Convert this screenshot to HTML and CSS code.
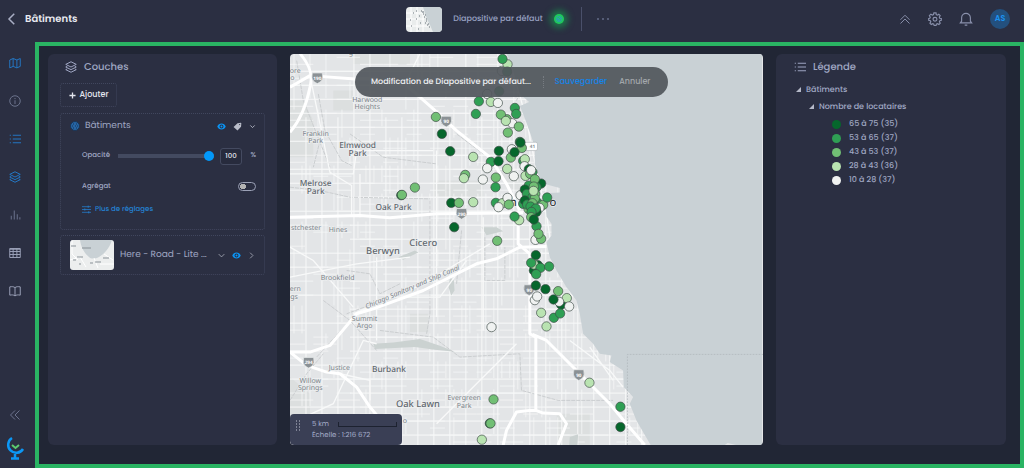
FILE: index.html
```html
<!DOCTYPE html>
<html lang="fr">
<head>
  <meta charset="UTF-8" />
  <meta name="viewport" content="width=device-width, initial-scale=1.0" />
  <title>Bâtiments</title>
  <link rel="stylesheet" href="styles.css">
</head>
<body>
  <svg class="defs" width="0" height="0" aria-hidden="true">
    <symbol id="i-layers" viewBox="0 0 16 16"><path d="M8 1 15 4.500 8 8 1 4.500ZM3 7 1 8l7 3.500L15 8l-2-1M3 10.500l-2 1L8 15l7-3.500-2-1"/></symbol>
    <symbol id="i-list" viewBox="0 0 16 16"><path d="M5 3h11M5 8h11M5 13h11M1 3h1.500M1 8h1.500M1 13h1.500"/></symbol>
    <symbol id="i-eye" viewBox="0 0 16 16"><path class="solid" fill-rule="evenodd" d="M8 2.500C4.500 2.500 1.800 4.800.5 8c1.300 3.200 4 5.500 7.500 5.500s6.200-2.300 7.500-5.500C14.200 4.800 11.500 2.500 8 2.500Zm0 2a3.500 3.500 0 1 1 0 7 3.500 3.500 0 0 1 0-7Zm0 1.700a1.800 1.800 0 1 0 0 3.600 1.800 1.800 0 0 0 0-3.600Z"/></symbol>
    <symbol id="i-down" viewBox="0 0 16 16"><path d="m3 5.500 5 5 5-5"/></symbol>
    <symbol id="i-right" viewBox="0 0 16 16"><path d="m5.500 3 5 5-5 5"/></symbol>
  </svg>

  <header class="topbar">
    <div class="title">
      <a href="#" class="icon-link" aria-label="Retour"><svg class="icon back" viewBox="0 0 16 16"><path d="M11 1 4 8l7 7"/></svg></a>
      <h1>Bâtiments</h1>
    </div>
    <div class="slide">
      <svg class="slide-thumb" viewBox="0 0 36 25">
        <path fill="#e9ecec" d="M0 0h36v25H0z"/>
        <path fill="#c9d1d5" d="M17 0h19v25H27l-3-7-3-6z"/>
        <path stroke="#fff" fill="none" d="M0 6h16M0 12h18M0 19h22M5 0v25M11 0v25M17 3v22"/>
        <path class="specks" d="M10 4h1M15 4h1M7 6h1M17 7h1M13 9h1M18 10h1M4 13h1M10 12h1M20 14h1M19 16h1M21 18h1M5 19h1M23 20h1M14 16h1M12 22h1M16 5h2M19 8h1M20 12h1M22 17h1"/>
      </svg>
      <span class="slide-name">Diapositive par défaut</span>
      <button class="pulse" aria-label="Position de la carte"><svg class="icon" viewBox="0 0 16 16"><circle cx="8" cy="8" r="5.500"/><path d="m4 10 6-6M6 12l6-6M4 6l6 6"/></svg></button>
      <button class="more" aria-label="Plus"><svg viewBox="0 0 14 4"><circle cx="2" cy="2" r="1"/><circle cx="7" cy="2" r="1"/><circle cx="12" cy="2" r="1"/></svg></button>
    </div>
    <div class="actions">
      <button aria-label="Réduire"><svg class="icon" viewBox="0 0 16 16"><path d="m2 9 6-6 6 6M2 14l6-6 6 6"/></svg></button>
      <button aria-label="Paramètres"><svg class="icon gear" viewBox="0 0 16 16"><path d="m6.700 1-.4 1.900-1.300.6-1.700-1-1.700 1.700 1 1.700L2 7.200.8 7.500v2L2.700 10l.5 1.200-1 1.600 1.500 1.500 1.700-1 1.200.5.400 1.600h2.200l.4-1.600 1.200-.5 1.700 1 1.500-1.500-1-1.700.5-1.100 1.700-.5v-2l-1.800-.4-.5-1.200 1-1.700-1.600-1.600-1.600 1-1.300-.6L9.200 1Z"/><circle cx="8" cy="8.300" r="2.200"/></svg></button>
      <button aria-label="Notifications"><svg class="icon bell" viewBox="0 0 16 16"><path d="M1.500 12.500h13L13 10.500V6.500a5 5 0 0 0-10 0v4ZM6.500 15h3"/></svg></button>
      <button class="avatar">AS</button>
    </div>
  </header>

  <div class="shell">
    <nav class="sidebar">
      <a href="#" class="on" aria-label="Carte"><svg class="icon" viewBox="0 0 16 16"><path d="m1 4 4.500-2 5 2L15 2v10.500l-4.500 2-5-2L1 14.500ZM5.500 2v10.500M10.500 4v10.500"/></svg></a>
      <a href="#" aria-label="Informations"><svg class="icon" viewBox="0 0 16 16"><circle cx="8" cy="8" r="7"/><path d="M8 7v5M8 4v1.500"/></svg></a>
      <a href="#" class="on" aria-label="Légende"><svg class="icon"><use href="#i-list"/></svg></a>
      <a href="#" class="on" aria-label="Couches"><svg class="icon"><use href="#i-layers"/></svg></a>
      <a href="#" aria-label="Graphiques"><svg class="icon" viewBox="0 0 16 16"><path d="M3 14V9M7 14V2M11 14V7M14.500 14v-3"/></svg></a>
      <a href="#" class="light" aria-label="Tableau"><svg class="icon" viewBox="0 0 16 16"><path d="M1 2h14v12H1ZM1 3h14M1 6h14M1 10h14M5.500 2v12M10.500 2v12"/></svg></a>
      <a href="#" class="light" aria-label="Guide"><svg class="icon" viewBox="0 0 16 16"><path d="M8 3.500C6 2 4 2 1 2.500v11c3-.5 5-.5 7 1 2-1.500 4-1.500 7-1v-11c-3-.5-5-.5-7 1v11"/></svg></a>
      <a href="#" class="collapse" aria-label="Replier"><svg class="icon" viewBox="0 0 16 16"><path d="M8 2 2 8l6 6M14 2 8 8l6 6"/></svg></a>
      <a href="#" class="logo" aria-label="Accueil"><svg viewBox="0 0 20 24"><path class="globe" d="M7 2A8 8 0 1 0 18 13"/><path class="globe" d="M10 18v4M6 22.500h8"/><path class="tick" d="m7 9 3.500 3L14 9"/></svg></a>
    </nav>

    <main class="workspace">
      <section class="panel">
        <h2><svg class="icon"><use href="#i-layers"/></svg>Couches</h2>
        <button class="add"><svg class="icon" viewBox="0 0 16 16"><path d="M8 1v14M1 8h14"/></svg>Ajouter</button>

        <div class="card">
          <div class="layer-row">
            <svg class="marker" viewBox="0 0 10 10"><circle cx="5" cy="5" r="4.500"/><path d="M3 3h1M6 3h1M2 5h1M5 5h1M7 5h1M3 7h1M6 7h1"/></svg>
            <span class="name">Bâtiments</span>
            <button class="blue" aria-label="Afficher"><svg class="icon"><use href="#i-eye"/></svg></button>
            <button aria-label="Étiquettes"><svg class="icon" viewBox="0 0 16 16"><path class="solid" fill-rule="evenodd" d="m8 2 6-.5.8.8-.5 6L8 15 1 9Zm3.800 1.500a1 1 0 1 0 .1 0Z"/></svg></button>
            <button aria-label="Déplier"><svg class="icon small"><use href="#i-down"/></svg></button>
          </div>
          <div class="setting">
            <label for="opacity">Opacité</label>
            <input id="opacity" class="slider" type="range" min="0" max="100" value="100">
            <input class="value" type="text" value="100" aria-label="Opacité en pour cent">
            <span class="unit">%</span>
          </div>
          <div class="setting">
            <label for="aggregate">Agrégat</label>
            <input id="aggregate" class="toggle" type="checkbox">
          </div>
          <a href="#" class="settings-link"><svg class="icon" viewBox="0 0 16 16"><path d="M0 3h16M0 8h16M0 13h16M11 1v4M5 6v4M12 11v4"/></svg>Plus de réglages</a>
        </div>

        <div class="card base">
          <svg class="base-thumb" viewBox="0 0 44 30">
            <path fill="#eceeee" d="M0 0h44v30H0z"/>
            <path fill="#c9d1d5" d="M10 0h32c-2 6-5 12-13 17-4 2-8 2-10 0C13 12 11 6 10 0z"/>
            <path class="roads" d="M2 0v14l6 6M0 20l10-3 6 10M24 18l4 10M34 14l9 6M30 24h14"/>
            <path class="words" d="M12 8h9M1 6h5M7 17h6M33 18h6M25 22h6M3 20h3M9 24h2M20 23h3"/>
          </svg>
          <span class="name">Here - Road - Lite ...</span>
          <button aria-label="Choisir le fond"><svg class="icon"><use href="#i-down"/></svg></button>
          <button class="blue" aria-label="Afficher"><svg class="icon"><use href="#i-eye"/></svg></button>
          <button aria-label="Ouvrir"><svg class="icon"><use href="#i-right"/></svg></button>
        </div>
      </section>

      <section class="map">
        <svg id="map" viewBox="0 9 1420 1176" preserveAspectRatio="xMidYMid slice">
          <rect class="land" y="9" width="1420" height="1176"/>
          <path class="district" d="M0 150h40l30 60v110H0zM130 120h60v60h-60zM0 980l60 50v80H0zM430 390h150v50H430zM360 790h55v55h-55zM190 0h170v40H190zM800 1090h100v95h-95zM610 350l50 60 30 20v-60z"/>
          <g id="streets"></g>
          <path class="park" d="M250 880l60-4 80-10 60 20 45 18-60-6-60-8-120 6zM480 680l12 10 2 30-10 15-8-25zM575 530h45l20 12-50 12zM325 620l50-20 10 6-45 22zM840 1160l25-8-2 32h-25z"/>
          <path class="rail" d="M0 410l90 10 90 20 240 5M85 130l20 110 50 90 30 15M90 270l-20 80M180 250l100 70 160 20M420 450v340l-10 60M330 700l-60 30-30-60-70-10M250 760l-80 30M190 800l-110 120M100 750l80 60 80 90M270 840l160 20 80 60 180-10 5 110 110 30h165M720 60l-40 90M500 250l80 60M585 560v130h60v-100M515 540l-15 160M0 1050l50-80 50-60M20 30l20 120 80 200"/>
          <path class="street-lg" d="M345 100L390 9M210 500v-130M0 370h190l10-70h230M60 75l60 290 65 40v90M0 680l200-40 160-20M190 790l210-90 200-120M0 1120l130-60 90-190 40 10M260 870v-250M440 300v500M580 500v340M290 740h160l80-110M840 870l120 90 40 50M440 1120l240-240M900 890l70 100M150 970l90 20v60M0 590l70 40 120 140M660 20l50 190 30 150 30 130 20 140 60 110"/>
          <path class="highway" d="M0 110l60-35 135 10h60M30 9c30 35 40 65 30 101C50 160 30 210 0 245M345 100l85 75 70 65 100 80 50 80 40 80M0 500l210-5 90 7 140-12 260-3M770 588l-80 2-70 35-60 15-160 80-150 55-50 15-80 95-60 20H0M685 487v93l35 30v240l18 10v220M728 852l42 18 100 100 90 90 50 60 55 64M640 1184l10-44 30-55 40-5h18l22 8 50 2 20 30-25 64M0 905l50 40 60 20 40 5 50 40 40 60 50 60 40 54"/>
          <path class="lake" d="M650 9l15 36 25 85 28 24-28 12 10 24 22 60 13 40v50l13 40 17 20 45 12v14l-45 2 5 70 15 22v35l-15 20 10 45 20 40 30 50 30 40 10 40 10 60 30 30 20 30 35 5-5 20 40 25 2 50 28 30-10 20 20 50 45 78h214l15-10 25 6 5 4h73V9z"/>
          <path class="border" d="M1013 1184V912h407"/>
          <g class="label sm">
            <text x="16" y="66">ore</text><text x="7" y="88">o</text><text x="183" y="14">g</text>
            <text x="232" y="154">Harwood</text><text x="232" y="176">Heights</text>
            <text x="77" y="256">Franklin</text><text x="77" y="278">Park</text>
            <text x="48" y="539">stchester</text><text x="144" y="543">Hines</text>
            <text x="143" y="688">Brookfield</text>
            <text x="16" y="723">ern</text><text x="12" y="745">gs</text>
            <text x="224" y="812">Summit</text><text x="224" y="834">Argo</text>
            <text x="148" y="960">Justice</text>
            <text x="61" y="998">Willow</text><text x="61" y="1020">Springs</text>
            <text x="523" y="1050">Evergreen</text><text x="523" y="1072">Park</text>
            <text x="345" y="1119">o</text>
            <text class="canal" transform="translate(370 716) rotate(-23)">Chicago Sanitary and Ship Canal</text>
          </g>
          <g class="label md">
            <text x="203" y="291">Elmwood</text><text x="203" y="317">Park</text>
            <text x="77" y="405">Melrose</text><text x="77" y="431">Park</text>
            <text x="311" y="478">Oak Park</text><text x="297" y="966">Burbank</text>
          </g>
          <g class="label lg">
            <text x="400" y="587">Cicero</text><text x="279" y="612">Berwyn</text><text x="384" y="1070">Oak Lawn</text>
          </g>
          <g class="label city"><text x="645" y="466">C</text><text x="670" y="466">h</text><text x="789" y="466">o</text></g>
          <g id="shields"></g>
          <g id="buildings"></g>
        </svg>

        <div class="toast">
          <span>Modification de Diapositive par défaut...</span>
          <button class="save">Sauvegarder</button>
          <button class="cancel">Annuler</button>
        </div>

        <div class="scale">
          <svg class="grip" viewBox="0 0 6 12"><path d="M1 1h1M4 1h1M1 4h1M4 4h1M1 7h1M4 7h1M1 10h1M4 10h1"/></svg>
          <div class="scale-text">
            <div class="scale-row"><span>5 km</span><span class="bar"></span></div>
            <div>Échelle : 1:216 672</div>
          </div>
        </div>
      </section>

      <section class="panel legend">
        <h2><svg class="icon"><use href="#i-list"/></svg>Légende</h2>
        <h3>Bâtiments</h3>
        <h4>Nombre de locataires</h4>
        <ul>
          <li><span class="swatch s5"></span>65 à 75 (35)</li>
          <li><span class="swatch s4"></span>53 à 65 (37)</li>
          <li><span class="swatch s3"></span>43 à 53 (37)</li>
          <li><span class="swatch s2"></span>28 à 43 (36)</li>
          <li><span class="swatch s1"></span>10 à 28 (37)</li>
        </ul>
      </section>
    </main>
  </div>
  <script src="map.js"></script>
</body>
</html>
```
FILE: styles.css
```css
* {
  box-sizing: border-box;
}
body {
  margin: 0;
  height: 100vh;
  display: flex;
  flex-direction: column;
  font-family: Poppins, Inter, sans-serif;
  font-size: 9px;
  text-rendering: geometricPrecision;
  color: #a0a8c4;
  background: #2b2f42;
}
h1, h2, h3, h4, ul {
  margin: 0;
  padding: 0;
  font-weight: 400;
}
button {
  display: flex;
  align-items: center;
  justify-content: center;
  padding: 0;
  border: 0;
  background: none;
  font: inherit;
  color: inherit;
}
a {
  color: inherit;
  text-decoration: none;
}
.defs {
  position: absolute;
}
.icon {
  display: block;
  width: 12px;
  height: 12px;
  fill: none;
  stroke: currentColor;
  stroke-width: 1.3;
}
.solid {
  fill: currentColor;
  stroke: none;
}

/* top bar */
.topbar {
  flex: 0 0 42px;
  display: grid;
  grid-template-columns: 1fr auto 1fr;
  align-items: center;
  padding: 0 14px 4px 6px;
}
.title {
  display: flex;
  align-items: center;
  gap: 7px;
}
.title h1 {
  font-size: 10px;
  font-weight: 600;
  color: #e8eaf0;
}
.back {
  color: #a9aec4;
  stroke-width: 2;
}
.slide {
  display: flex;
  align-items: center;
  gap: 11px;
}
.slide-thumb {
  width: 36px;
  height: 25px;
  border-radius: 4px;
}
.specks {
  stroke: #69727a;
}
.slide-name {
  font-size: 8px;
  font-weight: 500;
  color: #99a2c2;
}
.pulse {
  width: 10px;
  height: 10px;
  border-radius: 50%;
  background: #20c85c;
  box-shadow: 0 0 6px 4px #1d7549;
  color: #2f95c9;
}
.pulse .icon {
  width: 8px;
  height: 8px;
}
.more {
  height: 24px;
  padding-left: 14px;
  margin-left: 6px;
  border-left: 1px solid #4a506a;
}
.more svg {
  width: 14px;
  height: 4px;
  fill: #656c88;
}
.actions {
  display: flex;
  align-items: center;
  justify-content: flex-end;
  gap: 17px;
  color: #8990ab;
}
.actions .gear, .actions .bell {
  width: 14px;
  height: 14px;
}
.avatar {
  width: 20px;
  height: 20px;
  border-radius: 50%;
  background: #23507e;
  color: #1b93f2;
  font-size: 8px;
  font-weight: 600;
}

/* left navigation */
.shell {
  flex: 1;
  min-height: 0;
  display: flex;
}
.sidebar {
  flex: 0 0 35px;
  display: flex;
  flex-direction: column;
  padding: 2px 5px 0 0;
  color: #6d748e;
}
.sidebar a {
  flex: 0 0 38px;
  display: flex;
  align-items: center;
  justify-content: center;
}
.sidebar .on {
  color: #2477c4;
}
.sidebar .light {
  color: #9ba1b8;
}
.sidebar .collapse {
  flex-basis: 34px;
  margin-top: auto;
}
.sidebar .logo {
  flex-basis: 36px;
  align-items: flex-start;
  padding-top: 4px;
}
.logo svg {
  width: 20px;
  height: 24px;
  fill: none;
}
.globe {
  stroke: #0c97f5;
  stroke-width: 2.5;
}
.tick {
  stroke: #5dcb70;
  stroke-width: 2;
}

/* highlighted workspace */
.workspace {
  flex: 1;
  display: grid;
  grid-template-columns: 229px minmax(0, 1fr) 230px;
  grid-template-rows: minmax(0, 1fr);
  gap: 13px;
  padding: 8px 14px 19px 9px;
  border: 4px solid #2ab463;
  background: #212635;
}
.panel {
  padding: 6px 12px;
  border-radius: 6px;
  background: #2b2f42;
}
.panel h2 {
  display: flex;
  align-items: center;
  gap: 7px;
  height: 14px;
  padding-left: 5px;
  font-size: 10px;
  font-weight: 500;
}
.add {
  gap: 4px;
  width: 57px;
  height: 24px;
  margin: 9px 0 6px;
  border: 1px dotted #41475e;
  border-radius: 3px;
  font-size: 8px;
  font-weight: 500;
  color: #e4e6ee;
}
.add .icon {
  width: 7px;
  height: 7px;
  stroke-width: 3;
}
.card {
  padding: 0 8px 0 9px;
  border: 1px dotted #41475e;
  border-radius: 3px;
}
.layer-row {
  display: flex;
  align-items: center;
  gap: 7px;
  height: 24px;
}
.card .icon {
  width: 9px;
  height: 9px;
}
.card button {
  color: #b9bdc9;
}
.card .blue {
  color: #0a94f5;
}
.card .icon.small {
  width: 7px;
  stroke-width: 2;
}
.marker {
  width: 10px;
  height: 10px;
  margin-right: -2px;
  fill: #2565a5;
  stroke: #1b3555;
}
.name {
  flex: 1;
  white-space: nowrap;
}
.setting {
  display: flex;
  align-items: center;
  height: 25px;
  padding: 0 0 0 12px;
  font-size: 7px;
  font-weight: 500;
}
.layer-row + .setting {
  height: 36px;
}
.setting label {
  flex: 0 0 36px;
  white-space: nowrap;
}
.slider {
  appearance: none;
  flex: 1;
  min-width: 0;
  height: 10px;
  margin: 0 6px 0 0;
  background: linear-gradient(#434a60, #434a60) center / 100% 4px no-repeat;
}
.slider::-webkit-slider-thumb {
  appearance: none;
  width: 10px;
  height: 10px;
  border-radius: 50%;
  background: #0298fa;
}
.value {
  width: 22px;
  height: 17px;
  padding: 0;
  border: 1px solid #444a60;
  border-radius: 3px;
  background: #272b3d;
  color: #e4e6ee;
  font: inherit;
  text-align: center;
}
.unit {
  width: 14px;
  text-align: right;
}
.toggle {
  appearance: none;
  width: 18px;
  height: 9px;
  margin: 0 0 0 auto;
  border: 1px solid #9ba1b6;
  border-radius: 5px;
  background: radial-gradient(circle at 4px 50%, #b3b3b3 3px, transparent 3px);
}
.settings-link {
  display: flex;
  align-items: center;
  gap: 4px;
  height: 30px;
  padding: 0 0 9px 12px;
  font-size: 7px;
  font-weight: 500;
  color: #2482d4;
}
.base {
  display: flex;
  align-items: center;
  gap: 6px;
  height: 40px;
  margin-top: 5px;
}
.base-thumb {
  flex: 0 0 44px;
  height: 30px;
  border-radius: 3px;
}
.roads {
  fill: none;
  stroke: #fff;
}
.words {
  stroke: #899197;
}

/* map */
.map {
  position: relative;
  overflow: hidden;
  border-radius: 4px;
}
#map {
  display: block;
  width: 100%;
  height: 100%;
}
.land {
  fill: #e3e5e7;
}
.district {
  fill: #dcdfdf;
}
.park {
  fill: #cbd2d1;
}
.lake {
  fill: #c9d1d5;
}
.border {
  fill: none;
  stroke: #adb4b8;
  stroke-width: 2;
  stroke-dasharray: 5 4;
}
.rail {
  fill: none;
  stroke: #cbced0;
  stroke-width: 3;
  stroke-dasharray: 12 3;
}
.street, .street-lg, .highway {
  fill: none;
  stroke: #f8f9f9;
  stroke-width: 3;
}
.street-lg {
  stroke-width: 4;
}
.highway {
  stroke: #fff;
  stroke-width: 9;
  stroke-linejoin: round;
}
.label {
  font-family: "Noto Sans", sans-serif;
  text-anchor: middle;
  fill: #5f676e;
  stroke: #eceeef;
  stroke-width: 4;
  paint-order: stroke;
}
.label.sm {
  font-size: 21px;
  fill: #7b8389;
}
.canal {
  font-style: italic;
}
.label.md {
  font-size: 25px;
  font-weight: 500;
}
.label.lg {
  font-size: 28px;
  font-weight: 500;
}
.label.city {
  font-size: 34px;
  fill: #20252b;
}
.shield {
  fill: #8b9195;
  stroke: #eceeef;
  stroke-width: 2;
}
.shield-text {
  font-family: "Noto Sans", sans-serif;
  font-size: 14px;
  font-weight: 700;
  fill: #fff;
  text-anchor: middle;
}
.us-route {
  fill: #fff;
  stroke: #aeb3b7;
  stroke-width: 2;
}
.us-route + .shield-text {
  fill: #8b9195;
}
.b {
  stroke: #3c4a46;
  stroke-width: 2;
}
.b1 { fill: #f0f2f1; }
.b2 { fill: #b9e3b1; }
.b3 { fill: #71bf74; }
.b4 { fill: #2f9f54; }
.b5 { fill: #06672c; }

.toast {
  position: absolute;
  top: 13px;
  left: 65px;
  display: flex;
  align-items: center;
  height: 30px;
  padding: 0 18px 0 16px;
  border-radius: 15px;
  background: rgba(82, 87, 92, 0.93);
  font-size: 8px;
  font-weight: 500;
  white-space: nowrap;
  color: #f0f1f3;
}
.toast span {
  padding-right: 12px;
  margin-right: 11px;
  border-right: 1px dotted #777c82;
}
.save {
  color: #1583e6;
}
.cancel {
  margin-left: 12px;
  color: #a3a7ab;
}
.scale {
  position: absolute;
  left: 0;
  bottom: 0;
  display: flex;
  gap: 11px;
  width: 112px;
  height: 31px;
  padding: 5px;
  border-radius: 4px;
  background: #3a3f55;
  font-size: 7px;
  line-height: 11px;
  color: #a3abc8;
}
.grip {
  width: 6px;
  height: 12px;
  margin-top: 1px;
  stroke: #c4c8d6;
}
.scale-text {
  flex: 1;
}
.scale-row {
  display: flex;
  align-items: center;
  gap: 9px;
}
.bar {
  flex: 1;
  height: 5px;
  border: solid #1d2230;
  border-width: 0 1px 1px;
}

/* legend */
.legend {
  padding-left: 18px;
}
.legend h2 {
  padding-left: 0;
}
.legend h3, .legend h4 {
  display: flex;
  align-items: center;
  gap: 5px;
  height: 17px;
  margin-top: 7px;
  padding-left: 2px;
  font-size: 8px;
  font-weight: 500;
}
.legend h4 {
  margin-top: 0;
  padding-left: 15px;
}
.legend h3::before, .legend h4::before {
  content: "";
  border: solid transparent;
  border-width: 0 0 5px 5px;
  border-bottom-color: #b5b9c8;
}
.legend ul {
  margin-top: 2px;
  list-style: none;
}
.legend li {
  display: flex;
  align-items: center;
  gap: 8px;
  height: 14px;
  padding-left: 38px;
  font-size: 8px;
  font-weight: 500;
}
.swatch {
  width: 9px;
  height: 9px;
  border-radius: 50%;
}
.s1 { background: #f0f2f1; }
.s2 { background: #b9e3b1; }
.s3 { background: #71bf74; }
.s4 { background: #2f9f54; }
.s5 { background: #06672c; }
```
FILE: map.js
```js
// x, y, class (1 = fewest tenants, 5 = most)
var buildings = [
  [653, 41, 2], [638, 25, 4], [636, 61, 1], [652, 63, 4], [628, 122, 4],
  [592, 130, 1], [567, 152, 4], [603, 154, 2], [624, 157, 1], [558, 190, 4],
  [675, 172, 4], [679, 190, 4], [651, 206, 3], [633, 192, 3], [667, 218, 1], [648, 211, 2],
  [687, 228, 3], [654, 246, 3], [438, 199, 3], [456, 250, 5], [481, 302, 5],
  [696, 292, 3], [666, 296, 1], [690, 274, 4], [692, 276, 5], [663, 321, 3], [674, 305, 5],
  [627, 301, 5], [603, 334, 4], [626, 332, 5], [550, 319, 2], [592, 353, 1], [579, 387, 1],
  [526, 373, 3], [522, 383, 2], [618, 381, 3], [617, 410, 4], [652, 355, 2], [672, 377, 1],
  [700, 331, 4], [705, 326, 2], [704, 347, 1], [717, 356, 5], [707, 376, 2], [728, 365, 4],
  [721, 370, 3], [724, 359, 1], [334, 434, 5], [336, 433, 3], [375, 411, 3],
  [484, 457, 5], [507, 457, 3], [550, 455, 2], [618, 457, 4], [638, 458, 2], [653, 442, 1],
  [626, 470, 1], [657, 462, 3], [692, 434, 1], [700, 460, 4], [754, 399, 5], [740, 410, 4],
  [717, 405, 4], [705, 417, 5], [711, 430, 4], [735, 386, 3], [732, 408, 3], [728, 440, 4],
  [736, 430, 3], [742, 455, 4], [760, 463, 3], [749, 472, 1], [772, 441, 4], [705, 450, 5],
  [735, 444, 3], [716, 475, 3], [712, 462, 4], [728, 458, 3], [731, 421, 2], [740, 484, 5],
  [722, 468, 4], [738, 474, 4], [725, 484, 4], [688, 509, 2], [674, 498, 4], [724, 500, 3],
  [740, 527, 4], [732, 507, 5], [737, 568, 1], [754, 565, 3], [746, 550, 3], [493, 530, 5],
  [622, 571, 3], [738, 614, 5], [732, 660, 5], [744, 644, 5], [732, 642, 2], [724, 637, 4],
  [752, 652, 4], [778, 648, 4], [739, 671, 4], [738, 705, 5], [767, 716, 5], [805, 722, 3],
  [735, 749, 1], [742, 738, 1], [814, 763, 5], [831, 743, 2], [808, 754, 1], [791, 747, 5],
  [838, 768, 1], [754, 787, 2], [792, 802, 4], [811, 789, 4], [770, 828, 2], [605, 830, 1],
  [899, 997, 2], [992, 1069, 4], [992, 1130, 5], [611, 1047, 3], [600, 1119, 5], [602, 1119, 3],
  [576, 1168, 2]
];

var shields = [[82, 82, "190"], [469, 212, "90"], [515, 489, "290"], [56, 936, "294"], [867, 973, "90"], [718, 718, "90"]];

function add(parent, tag, attrs, text) {
  var el = document.createElementNS("http://www.w3.org/2000/svg", tag);
  for (var key in attrs) el.setAttribute(key, attrs[key]);
  if (text) el.textContent = text;
  parent.appendChild(el);
}

// repeatable random numbers so that the streets never move
var seed = 11;
function random() {
  seed = (seed * 16807) % 2147483647;
  return seed / 2147483647;
}

// street grid, broken up block by block
var minor = "";
var major = "";
for (var x = 12; x < 1100; x += 24) {
  for (var y = 9; y < 1185; y += 84) {
    if (random() < (x > 400 ? 0.5 : 0.35)) minor += "M" + x + " " + y + "v" + (random() < 0.5 ? 84 : 50);
  }
}
for (var y = 20; y < 1185; y += 21) {
  for (var x = 0; x < 1100; x += 70) {
    if (random() < (x > 400 ? 0.5 : 0.35)) minor += "M" + x + " " + y + "h" + (random() < 0.5 ? 70 : 45);
  }
}
for (var x = 48; x < 1100; x += 48) major += "M" + x + " " + (random() < 0.4 ? 200 : 9) + "V1185";
for (var y = 62; y < 1185; y += 42) major += "M" + (random() < 0.4 ? 180 : 0) + " " + y + "H1100";

var streets = document.getElementById("streets");
add(streets, "path", { "class": "street", d: minor, "stroke-opacity": 0.7 });
add(streets, "path", { "class": "street", d: major });

var signs = document.getElementById("shields");
shields.forEach(function (s) {
  add(signs, "path", { "class": "shield", d: "M" + (s[0] - 15) + " " + (s[1] - 15) + "h30q4 18-4 25q-5 4-11 7q-6-3-11-7q-8-7-4-25z" });
  add(signs, "text", { "class": "shield-text", x: s[0], y: s[1] + 6 }, s[2]);
});
add(signs, "rect", { "class": "us-route", x: 702, y: 275, width: 41, height: 25, rx: 5 });
add(signs, "text", { "class": "shield-text", x: 728, y: 293 }, "41");

var layer = document.getElementById("buildings");
buildings.forEach(function (b) {
  add(layer, "circle", { "class": "b b" + b[2], cx: b[0], cy: b[1], r: 14 });
});
```
